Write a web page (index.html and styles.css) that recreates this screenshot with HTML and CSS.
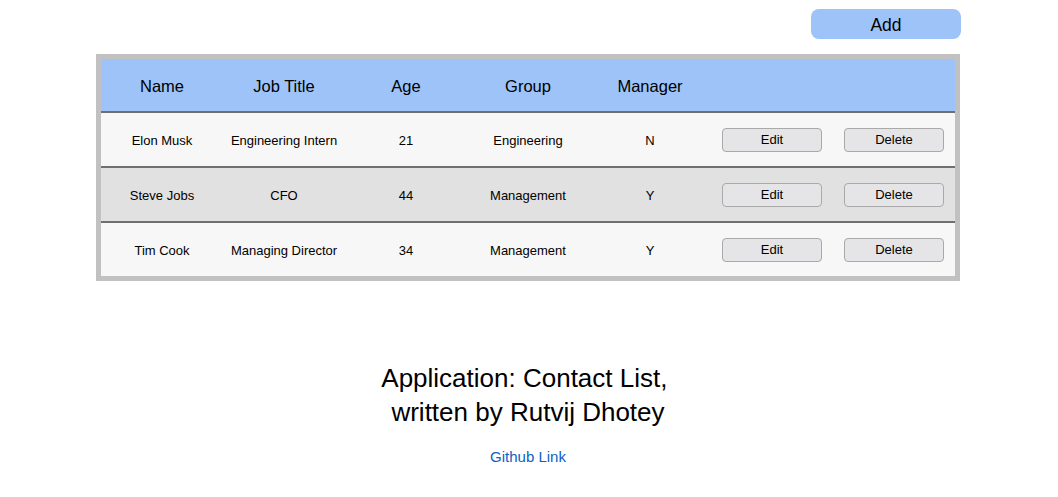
FILE: index.html
```html
<!DOCTYPE html>
<html>
<head>
<meta charset="utf-8">
<link rel="stylesheet" href="styles.css">
</head>
<body>
<div class="page">
  <div class="toolbar">
    <button class="add-btn">Add</button>
  </div>
  <div class="table">
    <div class="row head">
      <div class="cell">Name</div>
      <div class="cell">Job Title</div>
      <div class="cell">Age</div>
      <div class="cell">Group</div>
      <div class="cell">Manager</div>
      <div class="cell"></div>
      <div class="cell"></div>
    </div>
    <div class="row light">
      <div class="cell">Elon Musk</div>
      <div class="cell">Engineering Intern</div>
      <div class="cell">21</div>
      <div class="cell">Engineering</div>
      <div class="cell">N</div>
      <div class="cell"><button class="btn">Edit</button></div>
      <div class="cell"><button class="btn">Delete</button></div>
    </div>
    <div class="row dark">
      <div class="cell">Steve Jobs</div>
      <div class="cell">CFO</div>
      <div class="cell">44</div>
      <div class="cell">Management</div>
      <div class="cell">Y</div>
      <div class="cell"><button class="btn">Edit</button></div>
      <div class="cell"><button class="btn">Delete</button></div>
    </div>
    <div class="row light last">
      <div class="cell">Tim Cook</div>
      <div class="cell">Managing Director</div>
      <div class="cell">34</div>
      <div class="cell">Management</div>
      <div class="cell">Y</div>
      <div class="cell"><button class="btn">Edit</button></div>
      <div class="cell"><button class="btn">Delete</button></div>
    </div>
  </div>
  <div class="footer">
    <h2 class="title">Application: Contact List,&nbsp;<br>written by Rutvij Dhotey</h2>
    <a class="link" href="#">Github Link</a>
  </div>
</div>
</body>
</html>
```

FILE: styles.css
```css
html, body {
  margin: 0;
  padding: 0;
  background: #ffffff;
  font-family: "Liberation Sans", Arial, Helvetica, sans-serif;
  color: #000;
}

.page {
  width: 864px;
  margin: 0 auto;
  padding-top: 9px;
  position: relative;
  left: -1px;
}

.toolbar {
  display: flex;
  justify-content: flex-end;
  margin-right: -1px;
}

.add-btn {
  width: 150px;
  height: 30px;
  border: none;
  border-radius: 8px;
  background: #9dc3f8;
  font-family: inherit;
  font-size: 17.5px;
  color: #000;
  padding: 2px 0 0;
}

.table {
  margin-top: 15px;
  border: 5px solid #c2c1c1;
  display: flex;
  flex-direction: column;
}

.row {
  display: grid;
  grid-template-columns: repeat(7, 1fr);
  height: 53px;
  border-bottom: 2px solid #6f6f6f;
  font-size: 13px;
}

.row.last {
  border-bottom: none;
}

.row.head {
  height: 52px;
  background: #9dc3f8;
  font-size: 16.5px;
}

.row.light {
  background: #f7f7f7;
}

.row.dark {
  background: #e2e1e2;
}

.cell {
  display: flex;
  align-items: center;
  justify-content: center;
  text-align: center;
  padding-top: 2px;
}

.btn {
  width: 100px;
  height: 24px;
  margin-top: -2px;
  background: #e5e5e7;
  border: 1px solid #a9a9a9;
  border-radius: 4px;
  font-family: inherit;
  font-size: 13px;
  color: #000;
  padding: 0;
}

.footer {
  display: flex;
  flex-direction: column;
  align-items: center;
  margin-top: 80px;
}

.title {
  margin: 0;
  font-size: 26px;
  font-weight: normal;
  line-height: 34px;
  text-align: center;
}

.link {
  margin-top: 19px;
  font-size: 15px;
  color: #0b5fc8;
  text-decoration: none;
}
```
